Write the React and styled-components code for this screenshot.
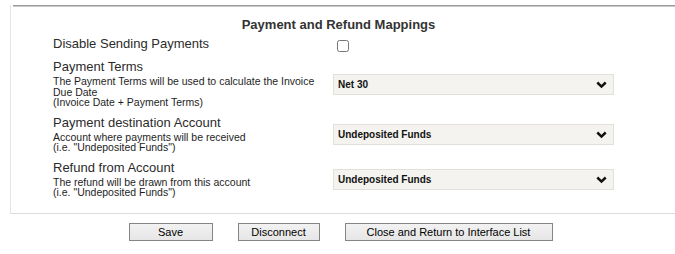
import React from "react"
import styled, { createGlobalStyle } from "styled-components"

const GlobalStyle = createGlobalStyle`
  body {
    margin: 0;
    background: #fff;
    font-family: "Liberation Sans", Arial, sans-serif;
    color: #333;
  }
`

const ROWS = [
  {
    label: "Payment Terms",
    help: ["The Payment Terms will be used to calculate the Invoice Due Date", "(Invoice Date + Payment Terms)"],
    value: "Net 30",
  },
  {
    label: "Payment destination Account",
    help: ["Account where payments will be received", '(i.e. "Undeposited Funds")'],
    value: "Undeposited Funds",
  },
  {
    label: "Refund from Account",
    help: ["The refund will be drawn from this account", '(i.e. "Undeposited Funds")'],
    value: "Undeposited Funds",
  },
]

const Chevron = () => (
  <svg width="11" height="8" viewBox="0 0 11 8">
    <path d="M1.3 1.5 L5.5 5.6 L9.7 1.5" fill="none" stroke="#111" strokeWidth="2.5" />
  </svg>
)

const App = () => {
  return (
    <>
      <GlobalStyle />
      <Panel>
        <Rule />
        <Title>Payment and Refund Mappings</Title>
        <Form>
          <Label>Disable Sending Payments</Label>
          <Value>
            <Checkbox type="checkbox" />
          </Value>
          {ROWS.map((row) => (
            <React.Fragment key={row.label}>
              <LabelCell>
                <Label>{row.label}</Label>
                <Help>
                  {row.help.map((line) => (
                    <div key={line}>{line}</div>
                  ))}
                </Help>
              </LabelCell>
              <Value>
                <SelectWrap>
                  <Select defaultValue={row.value}>
                    <option>{row.value}</option>
                  </Select>
                  <Arrow>
                    <Chevron />
                  </Arrow>
                </SelectWrap>
              </Value>
            </React.Fragment>
          ))}
        </Form>
      </Panel>
      <Buttons>
        <Button $width={84}>Save</Button>
        <Button $width={82}>Disconnect</Button>
        <Button $width={208}>Close and Return to Interface List</Button>
      </Buttons>
    </>
  )
}

export default App

const Panel = styled.section`
  margin-left: 10px;
  padding-bottom: 15px;
  border-left: 1px solid #e4e4e4;
  border-bottom: 1px solid #dcdcdc;
`

const Rule = styled.div`
  margin: 5px 0 0 2px;
  height: 1px;
  border-top: 1px solid #9c9c9c;
  background: #c8c8c8;
`

const Title = styled.h2`
  margin: 0;
  padding: 10px 9px 0 0;
  font-size: 13px;
  line-height: 16px;
  font-weight: bold;
  text-align: center;
  color: #333;
`

const Form = styled.div`
  display: grid;
  grid-template-columns: 280px 281px;
  row-gap: 7px;
  padding: 3px 0 0 42px;
`

const LabelCell = styled.div`
  display: flex;
  flex-direction: column;
`

const Label = styled.div`
  font-size: 13px;
  line-height: 16px;
  color: #2b2b2b;
`

const Help = styled.div`
  margin-top: 1px;
  font-size: 10.5px;
  line-height: 10.5px;
  color: #1e1e1e;
`

const Value = styled.div`
  display: flex;
  align-items: center;
`

const Checkbox = styled.input`
  width: 12px;
  height: 12px;
  margin: 4px 0 0 4px;
`

const SelectWrap = styled.div`
  position: relative;
  margin-top: 2px;
`

const Select = styled.select`
  appearance: none;
  display: block;
  width: 281px;
  height: 21px;
  padding: 0 0 0 4px;
  border: 1px solid #e2e0da;
  border-radius: 0;
  background: #f4f3ef;
  font-family: "Liberation Sans", Arial, sans-serif;
  font-size: 10px;
  font-weight: bold;
  color: #111;
`

const Arrow = styled.span`
  position: absolute;
  right: 7px;
  top: 7px;
  display: flex;
  pointer-events: none;
`

const Buttons = styled.div`
  display: flex;
  justify-content: center;
  gap: 25px;
  padding: 9px 0 0 6px;
`

const Button = styled.button`
  width: ${(p) => p.$width}px;
  height: 18px;
  padding: 0;
  border: 1px solid #858585;
  border-radius: 0;
  background: linear-gradient(#f2f2f2, #e6e6e6);
  font-family: "Liberation Sans", Arial, sans-serif;
  font-size: 11px;
  color: #000;
`
